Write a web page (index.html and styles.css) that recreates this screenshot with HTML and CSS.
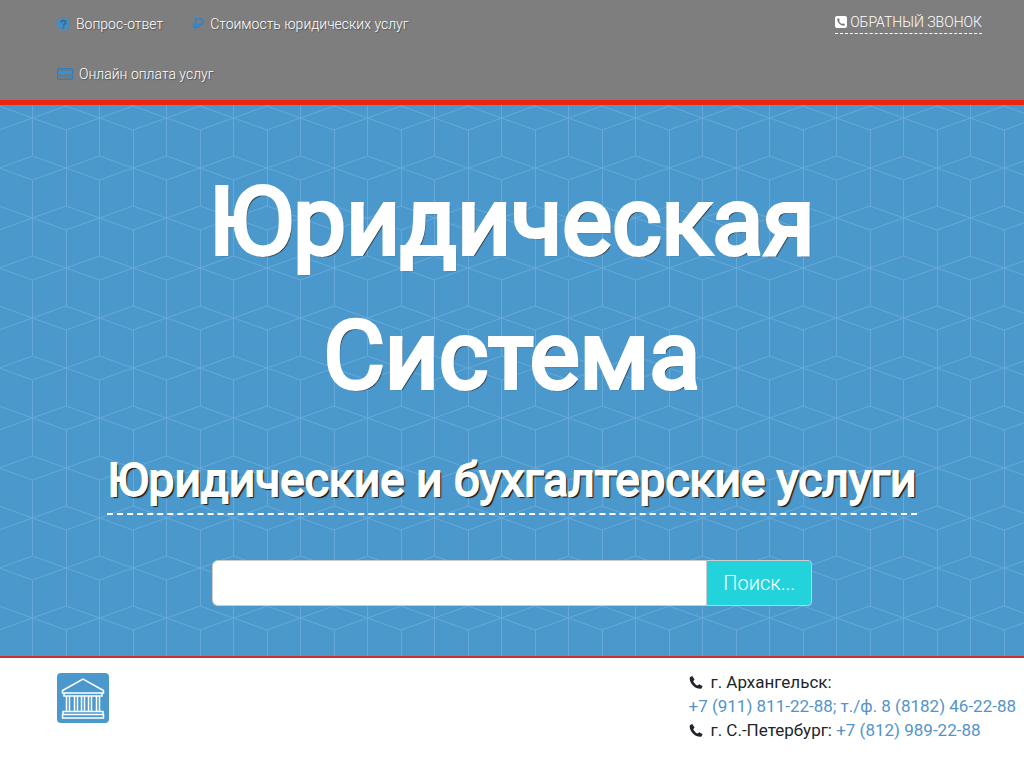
FILE: index.html
```html
<!DOCTYPE html>
<html lang="ru">
<head>
<meta charset="utf-8">
<meta name="viewport" content="width=device-width, initial-scale=1">
<title>Юридическая Система</title>
<link rel="stylesheet" href="styles.css">
</head>
<body>
<header class="topbar">
  <nav class="topnav">
    <a class="topnav-link" href="#faq"><svg class="icon" width="13" height="14" viewBox="0 0 13 14" aria-hidden="true"><circle cx="6.5" cy="7" r="6.3" fill="#3d8fce"/><path d="M4.3 5.5C4.4 3 8.7 2.9 8.7 5.4 8.7 7 6.6 6.9 6.6 8.5M6.6 9.6V11.2" fill="none" stroke="#56626c" stroke-width="1.8"/></svg>Вопрос-ответ</a>
    <a class="topnav-link" href="#prices"><svg class="icon" width="12" height="14" viewBox="0 0 12 14" aria-hidden="true"><path d="M3.5 13V1.8H7.5C12 1.8 12 7.5 7.5 7.5H.8M.8 10H8" fill="none" stroke="#3583c2" stroke-width="1.8"/></svg>Стоимость юридических услуг</a>
    <a class="topnav-link" href="#payment"><svg class="icon" width="16" height="14" viewBox="0 0 16 14" aria-hidden="true"><rect x=".5" y="1.5" width="15" height="11" rx="1" fill="#627c90" stroke="#2f7dbb"/><path d="M1 4H15V7H1ZM2 10H4V11H2ZM5 10H8V11H5Z" fill="#3d8fce"/></svg>Онлайн оплата услуг</a>
  </nav>
  <a class="callback" href="#callback"><svg class="callback-icon" width="12" height="12" viewBox="0 0 12 12" aria-hidden="true"><rect width="12" height="12" rx="2" fill="#fff"/><path d="M3.5 2 2.3 3C2 6.4 5.6 10 9 9.7L10 8.5 8 7.2 7 8C5.8 7.5 4.6 6.2 4.1 5L4.9 4Z" fill="#777"/></svg>ОБРАТНЫЙ ЗВОНОК</a>
</header>
<main class="hero">
  <svg class="hero-pattern" aria-hidden="true">
    <defs>
      <pattern id="cubes" width="67" height="100" patternUnits="userSpaceOnUse" patternTransform="translate(-1 13)">
        <g fill="none" stroke="#66a9d9" stroke-width="1">
          <path d="M0 -12 33.5 0 67 -12M0 12 33.5 0 67 12M0 88 33.5 100 67 88M0 112 33.5 100 67 112M0 50 33.5 38 67 50M0 50 33.5 62 67 50"/>
          <path d="M33.5 -38V38M33.5 62V138M.5 12V88"/>
        </g>
      </pattern>
    </defs>
    <rect width="100%" height="100%" fill="url(#cubes)"/>
  </svg>
  <h1 class="hero-title">Юридическая Система</h1>
  <h2 class="hero-subtitle">Юридические и бухгалтерские услуги</h2>
  <form class="search">
    <input class="search-input" type="text" aria-label="Поиск">
    <button class="search-button" type="submit">Поиск...</button>
  </form>
</main>
<footer class="infobar">
  <a class="logo" href="#home" aria-label="Юридическая Система"><svg width="52" height="50" viewBox="0 0 52 50" aria-hidden="true"><rect width="52" height="50" rx="4" fill="#4a98cc"/><path d="M5.5 20V17.5L26 6 46.5 17.5V20ZM7 20H45V23H7ZM6 38.5H46V41.5H6ZM5.5 41.5H46.5V45H5.5ZM9.5 23V38M12.5 23V38M17.5 23V38M20.5 23V38M24.5 23V38M27.5 23V38M31.5 23V38M34.5 23V38M39.5 23V38M42.5 23V38" fill="none" stroke="#fff" stroke-width="1.5"/></svg></a>
  <address class="contacts">
    <div><svg class="phone" width="14" height="14" viewBox="0 0 14 14" aria-hidden="true"><path d="M3.2 1 .8 2.2C-.2 8 6 14.3 12.2 13.7L13.7 11.3 10.2 9.2 8.6 10.6C6.8 9.8 5 8 4.2 6.2L5.6 4.6Z" fill="#212529"/></svg>г. Архангельск:</div>
    <div><a href="tel:+79118112288">+7 (911) 811-22-88; т./ф. 8 (8182) 46-22-88</a></div>
    <div><svg class="phone" width="14" height="14" viewBox="0 0 14 14" aria-hidden="true"><path d="M3.2 1 .8 2.2C-.2 8 6 14.3 12.2 13.7L13.7 11.3 10.2 9.2 8.6 10.6C6.8 9.8 5 8 4.2 6.2L5.6 4.6Z" fill="#212529"/></svg>г. С.-Петербург: <a href="tel:+78129892288">+7 (812) 989-22-88</a></div>
  </address>
</footer>
</body>
</html>
```
FILE: styles.css
```css
* { box-sizing: border-box; }
body {
  margin: 0;
  font-family: Roboto, "Noto Sans", sans-serif;
  font-size: 16px;
  line-height: 24px;
  color: #212529;
  background: #fff;
}
a { color: #5394c8; text-decoration: none; }

.topbar {
  display: flex;
  justify-content: space-between;
  align-items: flex-start;
  padding: 0 42px;
  background: #7e7e7e;
  border-bottom: 5px solid #ef260f;
  font-size: 14px;
  font-weight: 300;
}
.topnav { display: flex; flex-wrap: wrap; max-width: 420px; }
.topnav-link {
  display: flex;
  align-items: center;
  height: 50px;
  padding: 0 14px 2px 15px;
  color: #fff;
  text-shadow: 1px 1px 1px #555;
}
.icon { margin-right: 6px; }
.callback {
  display: flex;
  align-items: center;
  height: 24px;
  margin-top: 10px;
  color: #fff;
  border-bottom: 1px dashed #fff;
}
.callback-icon { margin-right: 3px; }

.hero {
  position: relative;
  display: flex;
  flex-direction: column;
  align-items: center;
  padding: 50px 100px;
  background: #4a98cc;
  border-bottom: 2px solid #c9302c;
  color: #fff;
}
.hero-pattern { position: absolute; inset: 0; width: 100%; height: 100%; }
.hero-title, .hero-subtitle, .search { position: relative; }
.hero-title, .hero-subtitle {
  margin: 0;
  font-weight: 400;
  text-align: center;
  text-shadow: 1px 1px 1px #000, 2px 2px 1px #222;
}
.hero-title {
  max-width: 800px;
  font-size: 94px;
  line-height: 134px;
  -webkit-text-stroke: 4px #fff;
}
.hero-subtitle {
  margin-top: 24px;
  font-size: 46px;
  line-height: 66px;
  border-bottom: 2px dashed #fff;
  -webkit-text-stroke: 2px #fff;
}
.search { display: flex; width: 100%; max-width: 600px; margin-top: 45px; }
.search-input {
  flex: 1;
  min-width: 0;
  height: 46px;
  padding: 10px 16px;
  border: 1px solid #ccc;
  border-right: 0;
  border-radius: 6px 0 0 6px;
  font: 300 18px Roboto, sans-serif;
}
.search-button {
  height: 46px;
  padding: 0 16px;
  border: 1px solid #ccc;
  border-radius: 0 4px 4px 0;
  background: #22d3db;
  color: #fff;
  font: 300 20px Roboto, sans-serif;
}

.infobar {
  display: flex;
  justify-content: space-between;
  align-items: flex-start;
  padding: 12px 8px 24px 57px;
}
.logo { display: flex; margin-top: 3px; }
.contacts { font-style: normal; font-size: 17px; }
.phone { margin-right: 8px; vertical-align: -1px; }
```
